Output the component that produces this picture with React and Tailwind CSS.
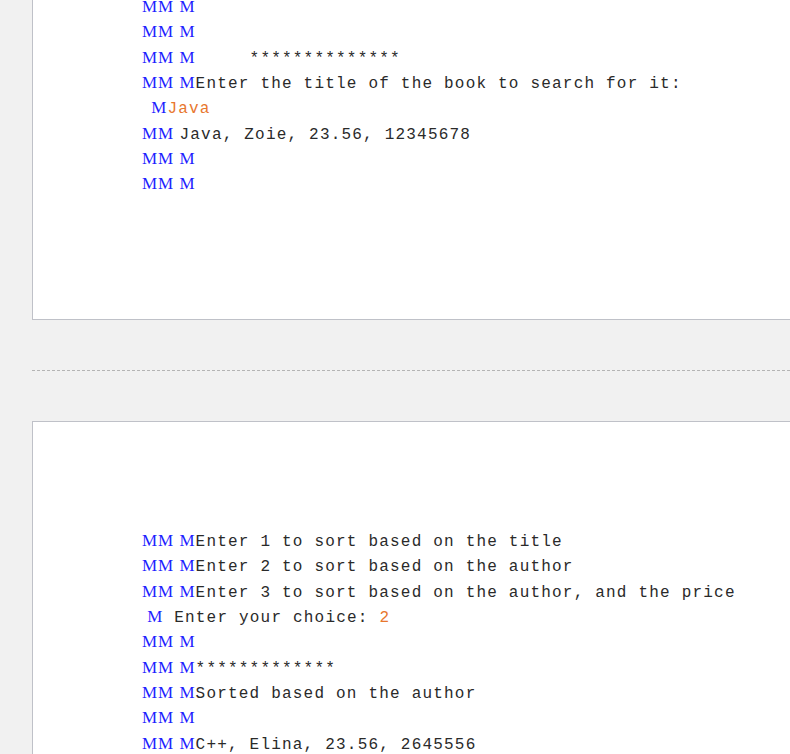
const serif = "font-['Liberation_Serif',serif] text-[17px] tracking-[1px] text-[#1f1fff]";
const mono = "font-['Liberation_Mono',monospace] text-[16px] tracking-[1.2px] text-[#2a2a2a]";
const orange = "text-[#e8772e]";

const Row = ({ m, indent, children }) => (
  <div className="h-[25.33px] leading-[25.33px] whitespace-pre">
    <span className={`${serif} ${indent ? "pl-[4px]" : ""}`}>{m}</span>
    {children}
  </div>
);

const page1 = [
  { m: "MM M" },
  { m: "MM M" },
  { m: "MM M", t: "     **************" },
  { m: "MM M", t: "Enter the title of the book to search for it:" },
  { m: " M", t: "Java", o: true, indent: true },
  { m: "MM ", t: "Java, Zoie, 23.56, 12345678" },
  { m: "MM M" },
  { m: "MM M" },
];

const page2 = [
  { m: "MM M", t: "Enter 1 to sort based on the title" },
  { m: "MM M", t: "Enter 2 to sort based on the author" },
  { m: "MM M", t: "Enter 3 to sort based on the author, and the price" },
  { m: " M", t: " Enter your choice: ", o2: "2" },
  { m: "MM M" },
  { m: "MM M", t: "*************" },
  { m: "MM M", t: "Sorted based on the author" },
  { m: "MM M" },
  { m: "MM M", t: "C++, Elina, 23.56, 2645556" },
];

const Lines = ({ rows }) =>
  rows.map((r, i) => (
    <Row key={i} m={r.m} indent={r.indent}>
      {r.t && <span className={`${mono} ${r.o ? orange : ""}`}>{r.t}</span>}
      {r.o2 && <span className={`${mono} ${orange}`}>{r.o2}</span>}
    </Row>
  ));

export default function App() {
  return (
    <div className="w-[790px] h-[754px] overflow-hidden bg-[#f1f1f1]">
      <div className="ml-[32px] w-[800px] h-[320px] overflow-hidden bg-white border-l border-b border-[#bfc1c8]">
        <div className="pl-[109px] -mt-[6px]">
          <Lines rows={page1} />
        </div>
      </div>
      <div className="ml-[32px] mt-[50px] border-t border-dashed border-[#b4b4b4]" />
      <div className="ml-[32px] mt-[50px] w-[800px] h-[400px] bg-white border-l border-t border-[#bfc1c8]">
        <div className="pl-[109px] pt-[106px]">
          <Lines rows={page2} />
        </div>
      </div>
    </div>
  );
}
